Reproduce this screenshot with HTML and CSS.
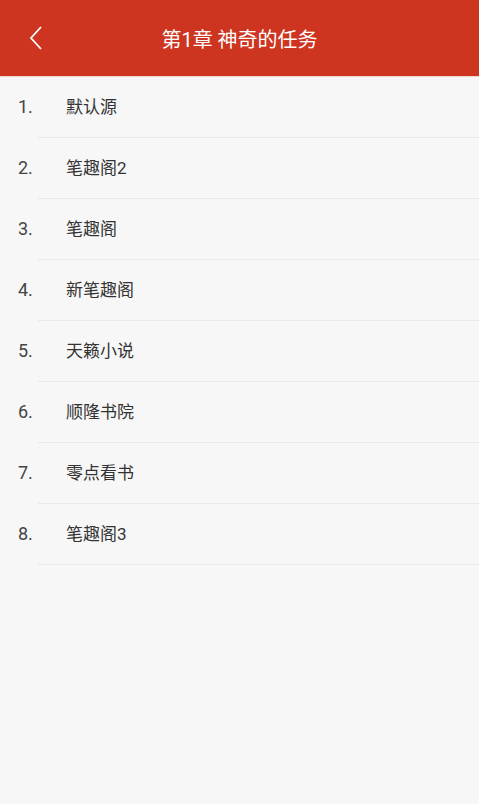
FILE: index.html
```html
<!DOCTYPE html>
<html lang="zh-CN">
<head>
    <meta charset="UTF-8">
    <meta name="viewport" content="width=device-width, initial-scale=1.0">
    <title>换源</title>
    <link rel="stylesheet" href="styles.css">
</head>
<body>
    <header class="top-bar">
        <button class="back-btn" aria-label="返回">
            <svg width="14" height="24" viewBox="0 0 14 24">
                <polyline points="12,1 2,12 12,23" fill="none" stroke="#fff" stroke-width="1.8" stroke-linejoin="miter"/>
            </svg>
        </button>
        <h1 class="title">第1章 神奇的任务</h1>
    </header>
    <ul class="source-list">
        <li class="source-item"><span class="num">1.</span><span class="name">默认源</span></li>
        <li class="source-item"><span class="num">2.</span><span class="name">笔趣阁2</span></li>
        <li class="source-item"><span class="num">3.</span><span class="name">笔趣阁</span></li>
        <li class="source-item"><span class="num">4.</span><span class="name">新笔趣阁</span></li>
        <li class="source-item"><span class="num">5.</span><span class="name">天籁小说</span></li>
        <li class="source-item"><span class="num">6.</span><span class="name">顺隆书院</span></li>
        <li class="source-item"><span class="num">7.</span><span class="name">零点看书</span></li>
        <li class="source-item"><span class="num">8.</span><span class="name">笔趣阁3</span></li>
    </ul>
</body>
</html>
```

FILE: styles.css
```css
body {
    margin: 0;
    height: 100vh;
    background-color: #f7f7f7;
    font-family: Roboto, "Noto Sans CJK SC", sans-serif;
}

.top-bar {
    position: relative;
    display: flex;
    align-items: center;
    justify-content: center;
    height: 76px;
    background-color: #cd3521;
    border-bottom: 1px solid #f0d4cf;
}

.back-btn {
    position: absolute;
    left: 29px;
    top: 26px;
    padding: 0;
    border: none;
    background: none;
    line-height: 0;
}

.title {
    margin: 0;
    color: #fff;
    font-size: 20px;
    font-weight: normal;
}

.source-list {
    list-style: none;
    margin: 0;
    padding: 0;
}

.source-item {
    display: flex;
    align-items: baseline;
    height: 60px;
    line-height: 60px;
    border-bottom: 1px solid #e9e9e9;
    margin-left: 38px;
    font-size: 17px;
}

.num {
    width: 48px;
    margin-left: -20px;
    font-size: 18px;
    color: #444;
}

.name {
    color: #333;
}
```
